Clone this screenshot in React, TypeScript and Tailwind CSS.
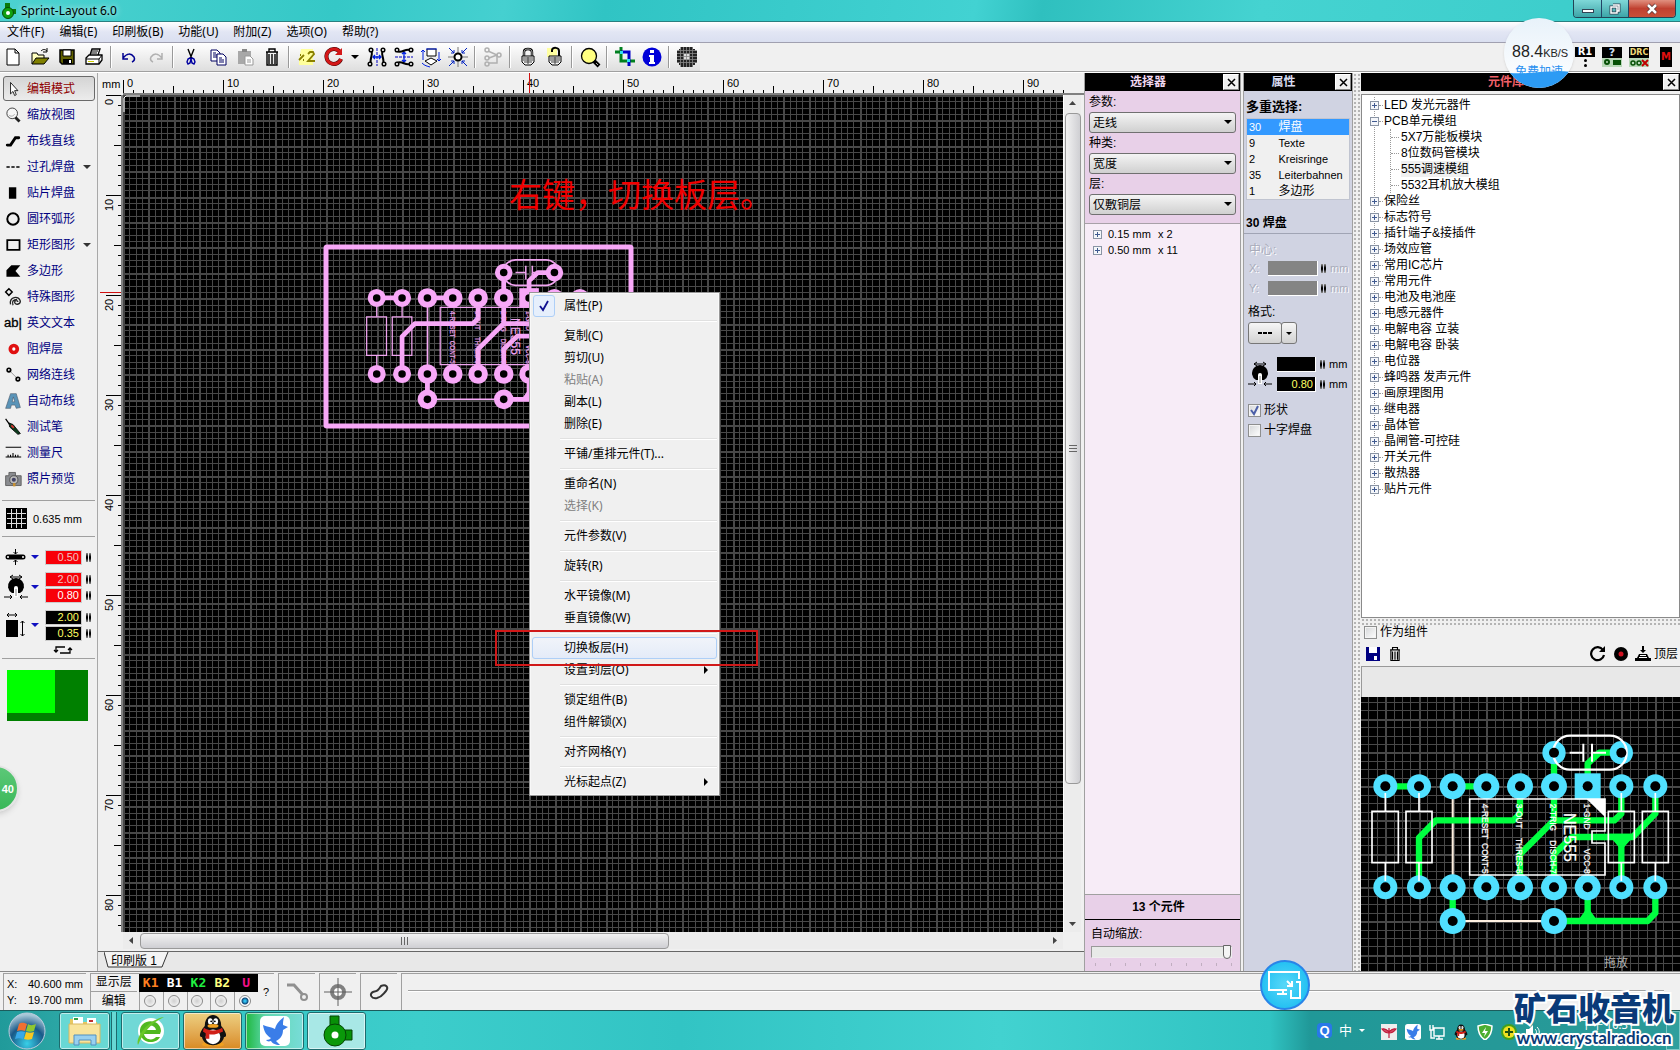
import { ReactNode } from 'react';
import clsx from 'clsx';

const TOOLBAR = [
  'new', 'open', 'save', 'print', '|', 'undo', 'redo', '|', 'cut', 'copy', 'paste', 'trash', '|',
  'double', 'rotate', 'caret', 'mirrorH', 'mirrorV', 'flip', 'center', '|', 'connect', '|',
  'lock', 'unlock', '|', 'zoom', '|', 'crop', 'info', '|', 'mask',
];

const TOOLS: { icon: string; label: string; more?: boolean }[] = [
  { icon: 'pointer', label: '编辑模式' },
  { icon: 'lens', label: '缩放视图' },
  { icon: 'track', label: '布线直线' },
  { icon: 'via', label: '过孔焊盘', more: true },
  { icon: 'smd', label: '贴片焊盘' },
  { icon: 'circle', label: '圆环弧形' },
  { icon: 'rect', label: '矩形图形', more: true },
  { icon: 'polygon', label: '多边形' },
  { icon: 'special', label: '特殊图形' },
  { icon: 'text', label: '英文文本' },
  { icon: 'solder', label: '阻焊层' },
  { icon: 'net', label: '网络连线' },
  { icon: 'auto', label: '自动布线' },
  { icon: 'probe', label: '测试笔' },
  { icon: 'measure', label: '测量尺' },
  { icon: 'camera', label: '照片预览' },
];

const MENU: { label: string; off?: boolean; checked?: boolean; sub?: boolean; hot?: boolean }[][] = [
  [{ label: '属性(P)', checked: true }],
  [{ label: '复制(C)' }, { label: '剪切(U)' }, { label: '粘贴(A)', off: true }, { label: '副本(L)' }, { label: '删除(E)' }],
  [{ label: '平铺/重排元件(T)...' }],
  [{ label: '重命名(N)' }, { label: '选择(K)', off: true }],
  [{ label: '元件参数(V)' }],
  [{ label: '旋转(R)' }],
  [{ label: '水平镜像(M)' }, { label: '垂直镜像(W)' }],
  [{ label: '切换板层(H)', hot: true }, { label: '设置到层(O)', sub: true }],
  [{ label: '锁定组件(B)' }, { label: '组件解锁(X)' }],
  [{ label: '对齐网格(Y)' }],
  [{ label: '光标起点(Z)', sub: true }],
];

const LIBRARY: { label: string; items?: string[] }[] = [
  { label: 'LED 发光元器件' },
  { label: 'PCB单元模组', items: ['5X7万能板模块', '8位数码管模块', '555调速模组', '5532耳机放大模组'] },
  { label: '保险丝' },
  { label: '标志符号' },
  { label: '插针端子&接插件' },
  { label: '场效应管' },
  { label: '常用IC芯片' },
  { label: '常用元件' },
  { label: '电池及电池座' },
  { label: '电感元器件' },
  { label: '电解电容 立装' },
  { label: '电解电容 卧装' },
  { label: '电位器' },
  { label: '蜂鸣器 发声元件' },
  { label: '画原理图用' },
  { label: '继电器' },
  { label: '晶体管' },
  { label: '晶闸管-可控硅' },
  { label: '开关元件' },
  { label: '散热器' },
  { label: '贴片元件' },
];

const LAYERS = [
  { name: 'K1', color: 'text-[#ff8020]' },
  { name: 'B1', color: 'text-white' },
  { name: 'K2', color: 'text-[#20f040]' },
  { name: 'B2', color: 'text-[#ffff80]' },
  { name: 'U', color: 'text-[#f0108a]' },
];

const range = (n: number) => Array.from({ length: n }, (_, i) => i);

/* 22x22 drawings */
const ICONS: Record<string, ReactNode> = {
  new: <path d="M5 3h8l4 4v12H5zM13 3v4h4" fill="#fff" stroke="#000" />,
  open: (
    <>
      <path d="M3 18V7h5l1 2h6v3" fill="#ffffc0" stroke="#000" />
      <path d="M3 18l4-6h13l-5 6z" fill="#808000" stroke="#000" />
      <path d="M12 5c2-2 4-2 6 0M18 2v4h-4" fill="none" stroke="#000" />
    </>
  ),
  save: (
    <>
      <path d="M4 4h14v14H6l-2-2z" fill="#606000" stroke="#000" strokeWidth="1.500" />
      <path d="M7 4h8v6H7z" fill="#fff" stroke="#000" />
      <path d="M7 13h9v5H7z" fill="#000" />
      <path d="M13 14h2v3h-2z" fill="#fff" />
    </>
  ),
  print: (
    <>
      <path d="M7 9l2-6h8l-2 6M3 12l3-3h13v5l-3 4H3z" fill="#fff" stroke="#000" strokeWidth="1.300" />
      <path d="M3 13h13v5M16 13l3-4M9 5h6M8 7h6" fill="none" stroke="#000" />
      <path d="M5 15h6v1H5z" fill="#cc0" />
    </>
  ),
  undo: <path d="M5 7v6h5M5 12c4-5 8-5 11-1 1 2 0 4-2 5" fill="none" stroke="#000090" strokeWidth="1.5" />,
  redo: <path d="M17 7v6h-5M17 12c-4-5-8-5-11-1-1 2 0 4 2 5" fill="none" stroke="#b0b0b0" strokeWidth="1.5" />,
  cut: (
    <>
      <path d="M8 3l4 10M14 3l-4 10" stroke="#000" strokeWidth="1.4" fill="none" />
      <path d="M10 12l-2 1-1 3 1 2 2-1 1-4zM12 12l2 1 1 3-1 2-2-1-1-4z" fill="none" stroke="#0000a0" strokeWidth="1.4" />
    </>
  ),
  copy: (
    <>
      <path d="M4 4h6l3 3v8H4zM6 7h3M6 9h5M6 11h5" fill="#fff" stroke="#000060" />
      <path d="M10 8h6l3 3v8h-9zM12 12h3M12 14h5M12 16h5" fill="#fff" stroke="#000060" />
    </>
  ),
  paste: (
    <>
      <path d="M4 5h13v13H4z" fill="#a8a8a8" />
      <path d="M8 3h5v3H8z" fill="#888" />
      <path d="M11 10h5l3 3v6h-8zM13 14h4M13 16h4" fill="#fff" stroke="#999" />
    </>
  ),
  trash: (
    <path d="M5 6h12M8 6V3h6v3M6 6v13h10V6M8 8v10M11 8v10M14 8v10" fill="none" stroke="#000" strokeWidth="1.400" />
  ),
  double: (
    <>
      <path d="M5 3h12v16H3v-5z" fill="#ffff9c" />
      <path d="M3 14l5-5M4 9h1M7 14h1M12 8l2-2h3l1 2-6 7h7" stroke="#8a8000" strokeWidth="1.800" fill="none" />
    </>
  ),
  rotate: (
    <>
      <path d="M17 6a7.500 7.500 0 1 0 1 7" fill="none" stroke="#400" strokeWidth="4" />
      <path d="M17 6a7.500 7.500 0 1 0 1 7" fill="none" stroke="#d41818" strokeWidth="3" />
      <path d="M19 2v7h-7z" fill="#d41818" />
    </>
  ),
  caret: <path d="M7 9h8l-4 4z" fill="#000" />,
  mirrorH: (
    <>
      <path d="M11 2v18" stroke="#0000c0" strokeDasharray="3 1" />
      <path d="M7 11h8M9 9l-2 2 2 2M13 9l2 2-2 2" fill="none" stroke="#0020e0" strokeWidth="1.300" />
      <path d="M5 5c3 2-2 8 0 13M17 5c-3 2 2 8 0 13" fill="none" stroke="#000" strokeWidth="2" />
      <circle cx="5" cy="4" r="1.800" fill="#fff" stroke="#000" strokeWidth="1.500" />
      <circle cx="4" cy="18" r="1.800" fill="#fff" stroke="#000" strokeWidth="1.500" />
      <circle cx="17" cy="4" r="1.800" fill="#fff" stroke="#000" strokeWidth="1.500" />
      <circle cx="18" cy="18" r="1.800" fill="#fff" stroke="#000" strokeWidth="1.500" />
    </>
  ),
  mirrorV: (
    <>
      <path d="M2 11h18" stroke="#0000c0" strokeDasharray="3 1" />
      <path d="M11 6v10M9 8l2-2 2 2M9 14l2 2 2-2" fill="none" stroke="#0020e0" strokeWidth="1.300" />
      <path d="M4 5c5 3 8-3 13-1M4 17c5-3 8 3 13 1" fill="none" stroke="#000" strokeWidth="2" />
      <circle cx="4" cy="4" r="1.800" fill="#fff" stroke="#000" strokeWidth="1.500" />
      <circle cx="18" cy="4" r="1.800" fill="#fff" stroke="#000" strokeWidth="1.500" />
      <circle cx="4" cy="18" r="1.800" fill="#fff" stroke="#000" strokeWidth="1.500" />
      <circle cx="18" cy="18" r="1.800" fill="#fff" stroke="#000" strokeWidth="1.500" />
    </>
  ),
  flip: (
    <>
      <path d="M7 3h9v7H7zM5 15l6-3 6 3-6 4z" fill="#fff" stroke="#000" />
      <path d="M3 4v10M1 6l2-2 2 2M19 6v9M17 13l2 2 2-2M2 17c3 3 5 3 8 4M6 3h11" fill="none" stroke="#0020e0" />
    </>
  ),
  center: (
    <>
      <path d="M11 1v20M1 11h20" stroke="#777" />
      <path d="M2 2l5 5M7 4v3H4M20 2l-5 5M15 4v3h3M2 20l5-5M7 18v-3H4M20 20l-5-5M15 18v-3h3" fill="none" stroke="#0020c0" />
      <circle cx="11" cy="11" r="3.500" fill="#fff" stroke="#000" strokeWidth="2" />
    </>
  ),
  connect: (
    <g fill="none" stroke="#b0b0b0" strokeWidth="1.500">
      <path d="M6 5l9 4v8H7M7 12l8-3" />
      <circle cx="5" cy="4" r="2" />
      <circle cx="5" cy="12" r="2" />
      <circle cx="5" cy="18" r="2" />
      <circle cx="17" cy="9" r="2" />
    </g>
  ),
  lock: (
    <>
      <path d="M7 10V6c0-4 8-4 8 0v4" fill="none" stroke="#000" strokeWidth="2.400" />
      <path d="M7 10V6c0-4 8-4 8 0v4" fill="none" stroke="#ddd" strokeWidth=".8" />
      <path d="M5 10h12v6l-3 3H8l-3-3z" fill="#f4f4f4" stroke="#000" />
      <path d="M6 12h10M6 14h10M7 16h8M11 11v7" stroke="#444" />
    </>
  ),
  unlock: (
    <>
      <path d="M3 2h10v9H3z" fill="#ffffa0" />
      <path d="M8 6V4c1-3 7-3 7 1v5" fill="none" stroke="#000" strokeWidth="2" />
      <path d="M5 10h12v6l-3 3H8l-3-3z" fill="#f4f4f4" stroke="#000" />
      <path d="M6 12h10M6 14h10M7 16h8M11 11v7" stroke="#444" />
    </>
  ),
  zoom: (
    <>
      <circle cx="10" cy="10" r="7.500" fill="#ffff80" stroke="#000" strokeWidth="1.300" />
      <path d="M15 15l5 5" stroke="#000" strokeWidth="4" />
      <path d="M17 17l2 2" stroke="#aaa" strokeWidth="1" />
    </>
  ),
  crop: (
    <>
      <path d="M1 6h6M7 1v14h8M15 15h6" fill="none" stroke="#008020" strokeWidth="3" />
      <path d="M7 6h8v14" fill="none" stroke="#0000c8" strokeWidth="3" />
      <path d="M6 5h3v3H6zM13 13h3v3h-3z" fill="#30e0f0" />
    </>
  ),
  info: (
    <>
      <circle cx="11" cy="11" r="9.500" fill="#0000d8" />
      <path d="M9 4h4v3H9zM8 9h5v7h1v2H8v-2h1v-5H8z" fill="#fff" />
    </>
  ),
  mask: (
    <>
      <path d="M5 1h12v2h2v2h2v12h-2v2h-2v2H5v-2H3v-2H1V5h2V3h2z" fill="#222" />
      <path d="M8 8h6v6H8z" fill="#ddd" />
      <path d="M4.500 1v20M7.500 1v20M10.500 1v20M13.500 1v20M16.500 1v20M1 4.500h20M1 7.500h20M1 10.500h20M1 13.500h20M1 16.500h20" stroke="#888" strokeWidth=".8" />
    </>
  ),
  pointer: <path d="M8 3v14l3-3 2 5 2-1-2-5h4z" fill="#fff" stroke="#000" />,
  lens: (
    <>
      <circle cx="10" cy="9" r="6.500" fill="#f6f6f6" stroke="#222" />
      <path d="M6 11c2 2 5 2 7-1" stroke="#999" fill="none" />
      <path d="M14 14l5 5" stroke="#222" strokeWidth="3.500" />
    </>
  ),
  track: <path d="M4 16h4l6-9h4" fill="none" stroke="#000" strokeWidth="3.500" strokeLinecap="round" />,
  via: <path d="M3 10h4v2H3zM9 10h4v2H9zM15 10h4v2h-4z" fill="#000" />,
  smd: <path d="M6 4h9v14H6z" fill="#000" />,
  circle: <circle cx="11" cy="11" r="7" fill="none" stroke="#000" strokeWidth="2.400" />,
  rect: <path d="M4 5h15v12H4z" fill="none" stroke="#000" strokeWidth="2.200" />,
  polygon: <path d="M9 4h11l-6 7 6 7H3v-8z" fill="#000" />,
  special: (
    <>
      <path d="M6 1l4 4-4 4-4-4z" fill="none" stroke="#000" strokeWidth="1.800" />
      <path d="M8 20c-2-9 10-12 12-4 0 5-7 5-7 1 0-2 4-2 4 0M11 21c-2-5 1-7 5-7" fill="none" stroke="#222" strokeWidth="1.600" />
    </>
  ),
  text: (
    <text x="0" y="16" fontSize="16" fontFamily="Liberation Sans, sans-serif" stroke="#000" strokeWidth=".4">ab|</text>
  ),
  solder: (
    <>
      <circle cx="12" cy="11" r="6.500" fill="#e01010" />
      <circle cx="12" cy="11" r="2" fill="#fff" />
    </>
  ),
  net: (
    <>
      <path d="M6 5l11 11" stroke="#888" />
      <circle cx="6" cy="5" r="2.200" fill="none" stroke="#000" strokeWidth="2" />
      <circle cx="17" cy="16" r="2.200" fill="none" stroke="#000" strokeWidth="2" />
    </>
  ),
  auto: <path d="M2 20L8 2h7l5 17-5 1-1.500-4H9l-1 4zM10 12h3l-1.500-6z" fill="#5a94b8" stroke="#456" strokeWidth=".7" />,
  probe: (
    <>
      <path d="M2 1l5 7" stroke="#000" strokeWidth="1.500" />
      <path d="M6 6l5 2 9 11-3 1L7 11z" fill="#0b3b1b" stroke="#000" />
      <path d="M9 9l3 3" stroke="#e03030" strokeWidth="2" />
    </>
  ),
  measure: (
    <path d="M2 4h19M2 16h19M5 16v-3M8 16v-3M11 16v-5M14 16v-3M17 16v-3" stroke="#000" strokeWidth="1.300" />
  ),
  camera: (
    <>
      <path d="M2 7h4V3h8v4h7v12H2z" fill="#8a8c90" stroke="#555" />
      <circle cx="12" cy="12" r="5" fill="#bbb" stroke="#444" />
      <circle cx="12" cy="12" r="2.500" fill="#446" />
      <path d="M11 16h3v4h-3z" fill="#c89030" />
    </>
  ),
  padSize: (
    <>
      <path d="M5 1h12M8-1L5 1l3 2M14-1l3 2-3 2" fill="none" stroke="#000" />
      <path d="M7 17a8 8 0 1 1 8 0z" fill="#000" />
      <path d="M9 21v-9a2 2 0 1 1 4 0v9z" fill="#fff" />
      <path d="M10.500 13h1v7h-1z" fill="#888" />
      <path d="M-1 21h8M5 19l2 2-2 2M23 21h-8M17 19l-2 2 2 2" fill="none" stroke="#000" />
    </>
  ),
};

function Icon({ name, small }: { name: string; small?: boolean }) {
  return (
    <svg viewBox="0 0 22 22" className={clsx('block shrink-0 overflow-visible', small ? 'size-[18px]' : 'size-[22px]')} aria-hidden="true">
      {ICONS[name]}
    </svg>
  );
}

/* grid lines, every fourth one is thicker */
function Grid({ cols, rows, step, x = 0, y = 0, scale = 1 }: { cols: number; rows: number; step: number; x?: number; y?: number; scale?: number }) {
  const w = cols * step;
  const h = rows * step;
  return (
    <g fill="#484848" shapeRendering="crispEdges">
      {range(cols).map((i) => (
        <rect key={i} x={Math.round(x + i * step)} y={y} width={(i % 4 ? 1 : 2) * scale} height={h} />
      ))}
      {range(rows).map((i) => (
        <rect key={i} x={x} y={Math.round(y + i * step)} width={w} height={(i % 4 ? 1 : 2) * scale} />
      ))}
    </g>
  );
}

interface BoardProps {
  copper: string;
  pad: string;
  silk: string;
  wire: string;
}

function Board({ copper, pad, silk, wire }: BoardProps) {
  const pads = [
    ...[108, 209, 816, 918].flatMap((x) => [[x, 558, 36], [x, 861, 36]]),
    ...[310, 411, 512, 614].map((x) => [x, 558, 39]),
    ...[310, 411, 512, 614, 715].map((x) => [x, 861, 39]),
    [310, 962, 39], [614, 962, 39], [614, 457, 35], [816, 457, 35],
  ];
  return (
    <g>
      <path d="M310 558V861M310 962H614" stroke={wire} strokeWidth="6" />
      <path
        d="M108 558H209M310 558H411M512 558V640L492 660H260L209 712V861M614 457V660L512 762V861M816 457H750L715 490V558M614 660H795L816 640V558M614 861V762L668 710H850L918 640V558M816 861V710M310 861V962M614 962H895L918 938V861M715 861V962"
        fill="none" stroke={copper} strokeWidth="19" strokeLinejoin="round"
      />
      <path d="M775 700H860L816 750ZM685 962H745L715 920Z" fill={copper} />
      {pads.map(([x, y, r]) => (
        <circle key={`${x}-${y}`} cx={x} cy={y} r={r} fill={pad} />
      ))}
      <rect x="676" y="519" width="78" height="78" fill={pad} />
      <g fill="none" stroke={silk} strokeWidth="5">
        <path d="M108 578V633M108 787V842M209 578V633M209 787V842M816 578V633M816 787V842M918 578V633M918 787V842" />
        <path d="M68 633H147V787H68ZM170 633H248V787H170ZM777 633H855V787H777ZM879 633H957V787H879Z" />
        <path d="M767 596H361V824H767V728H728V692H767Z" />
        <rect x="612" y="406" width="220" height="102" rx="50" strokeWidth="7" />
        <path d="M661 457H702M702 430V484M728 430V484M728 457H770" strokeWidth="6" />
      </g>
      <path d="M712 596H767V650Z" fill={silk} />
      {pads.concat([[715, 558, 0]]).map(([x, y]) => (
        <circle key={`h${x}-${y}`} cx={x} cy={y} r="15" fill="#000" />
      ))}
      <g fill={silk} stroke={silk} strokeWidth=".8" fontSize="25" fontFamily="Liberation Sans, sans-serif">
        <text transform="translate(399 610) rotate(90)">4-RESET</text>
        <text transform="translate(399 820) rotate(90)" textAnchor="end">CONT-5</text>
        <text transform="translate(501 610) rotate(90)">3-OUT</text>
        <text transform="translate(501 820) rotate(90)" textAnchor="end">THRES-6</text>
        <text transform="translate(603 610) rotate(90)">2-TRIG</text>
        <text transform="translate(603 820) rotate(90)" textAnchor="end">DISCH-7</text>
        <text transform="translate(703 610) rotate(90)">1-GND</text>
        <text transform="translate(703 820) rotate(90)" textAnchor="end">VCC-8</text>
        <text transform="translate(643 638) rotate(90)" fontSize="48">NE555</text>
      </g>
    </g>
  );
}

function TitleBar() {
  return (
    <header className="flex h-[22px] shrink-0 items-center border-b border-[#2a7f80] bg-[linear-gradient(100deg,#4cd2d0_0%,#35c8c7_20%,#45d0d0_30%,#30c4c4_36%,#42d2d2_58%,#2fc0bf_62%,#45d3d1_75%,#3accca_100%)] pl-px">
      <svg viewBox="0 0 16 16" className="size-4" aria-hidden="true">
        <path d="M4 0h5v6H4zM9 6h6v5H9z" fill="#0a7a0a" />
        <circle cx="7" cy="10" r="5.500" fill="#10a010" stroke="#054d05" />
        <circle cx="7" cy="10" r="2" fill="#fff" />
      </svg>
      <h1 className="ml-1 font-['Noto_Sans'] text-[12px] text-black [text-shadow:0_0_6px_white]">Sprint-Layout 6.0</h1>
      <div className="mr-1 ml-auto flex h-[18px] self-start overflow-hidden rounded-b border border-t-0 border-[#245]">
        <button aria-label="最小化" className="flex w-7 items-center justify-center border-r border-[#246] bg-gradient-to-b from-[#7fd8d8] to-[#3ba5a8]">
          <span className="mt-1 h-1 w-3 border border-[#345] bg-white" />
        </button>
        <button aria-label="还原" className="flex w-[27px] items-center justify-center border-r border-[#246] bg-gradient-to-b from-[#7fd8d8] to-[#3ba5a8]">
          <svg viewBox="0 0 12 12" className="size-3" aria-hidden="true">
            <path d="M4 2h6v6H8M2 4h6v6H2z" fill="none" stroke="#345" strokeWidth="3" />
            <path d="M4 2h6v6H8M2 4h6v6H2z" fill="none" stroke="#fff" strokeWidth="1.500" />
          </svg>
        </button>
        <button aria-label="关闭" className="flex w-[46px] items-center justify-center bg-gradient-to-b from-[#e09080] via-[#c04030] to-[#c85038]">
          <svg viewBox="0 0 12 12" className="size-3" aria-hidden="true">
            <path d="M2 2l8 8M10 2l-8 8" stroke="#533" strokeWidth="4" />
            <path d="M2 2l8 8M10 2l-8 8" stroke="#fff" strokeWidth="2.500" />
          </svg>
        </button>
      </div>
    </header>
  );
}

function MenuBar() {
  const entries = ['文件(F)', '编辑(E)', '印刷板(B)', '功能(U)', '附加(Z)', '选项(O)', '帮助(?)'];
  return (
    <nav className="flex h-[21px] shrink-0 items-center gap-[15px] border-b border-[#a0a0b0] bg-gradient-to-b from-white via-[#e2e6f4] to-[#dadff0] pl-[7px] font-['Noto_Sans','Noto_Sans_CJK_SC',sans-serif]">
      {entries.map((e) => (
        <button key={e}>{e}</button>
      ))}
    </nav>
  );
}

function Toolbar() {
  return (
    <div className="flex h-[29px] shrink-0 justify-between border-b border-[#a0a0a0] bg-[#f0f0f0]">
      <div className="-ml-px flex items-center bg-gradient-to-b from-white to-[#dedede]">
        {TOOLBAR.map((name, i) =>
          name === '|' ? (
            <span key={i} className="mx-[3px] h-[22px] w-[2px] border-l border-[#999] bg-white" />
          ) : (
            <button key={i} aria-label={name} className={clsx('flex items-center justify-center', name === 'caret' ? 'w-4' : 'w-[27px]')}>
              <Icon name={name} />
            </button>
          )
        )}
      </div>
      <div className="mr-1 flex items-center gap-[7px] font-['DejaVu_Sans'] leading-none font-bold">
        <button className="flex h-5 w-5 flex-col items-center">
          <span className="w-full bg-black text-center text-[10px] text-white">R1</span>
          <i className="mt-[2px] size-[3px] rounded-full bg-black" />
          <i className="mt-[2px] size-[3px] rounded-full bg-black" />
        </button>
        <button className="flex h-5 w-5 flex-col items-center bg-[#b8d8b8]">
          <span className="w-full bg-black text-center text-[11px] text-[#d0e0f0]">?</span>
          <span className="flex w-full items-center justify-around pt-px">
            <i className="size-[6px] rounded-full border-2 border-[#075007]" />
            <i className="h-[5px] w-2 bg-[#075007]" />
          </span>
        </button>
        <button className="flex h-5 w-5 flex-col items-center bg-[#b8d8b8]">
          <span className="w-full overflow-hidden bg-black text-center text-[8px] leading-[11px] text-[#f0d878]">DRC</span>
          <svg viewBox="0 0 20 9" className="h-[9px] w-5" aria-hidden="true">
            <circle cx="4" cy="5" r="2" fill="none" stroke="#075007" strokeWidth="1.500" />
            <circle cx="10" cy="5" r="2" fill="none" stroke="#075007" strokeWidth="1.500" />
            <path d="M13 2l6 6M19 2l-6 6" stroke="#c00000" strokeWidth="2" />
          </svg>
        </button>
        <button className="flex h-5 w-5 items-center justify-center">
          <span className="flex h-5 w-3 items-center justify-center bg-black text-[10px] text-[#e01010]">M</span>
        </button>
      </div>
    </div>
  );
}

function Spin() {
  return (
    <span className="flex h-[9px] w-[5px] shrink-0 justify-between" aria-hidden="true">
      <i className="w-[2px] bg-gradient-to-b from-[#999] via-black to-[#999]" />
      <i className="w-[2px] bg-gradient-to-b from-[#999] via-black to-[#999]" />
    </span>
  );
}

function SideField({ label, value, tone }: { label: string; value: string; tone: string }) {
  return (
    <div className="flex h-4 items-center gap-1">
      <input aria-label={label} defaultValue={value} className={clsx('h-[15px] w-[37px] border border-[#ccc] pr-[2px] text-right text-[11px] leading-none', tone)} />
      <Spin />
    </div>
  );
}

function BlueCaret() {
  return <span className="mr-[6px] ml-1 block size-0 border-x-4 border-t-4 border-x-transparent border-t-[#1010c0]" />;
}

function Sidebar() {
  return (
    <aside className="relative w-[98px] shrink-0 border-r border-[#a8a8a8] bg-[#f0f0f0] pt-[3px]">
      {TOOLS.map((t, i) => (
        <button
          key={t.label}
          className={clsx(
            'mx-[3px] mb-px flex h-[25px] w-[92px] items-center rounded-[3px] border',
            i === 0 ? 'border-[#6a6a6a] bg-gradient-to-b from-[#d4d4d4] to-[#ececec] text-[#900000]' : 'border-transparent text-[#000080]'
          )}
        >
          <Icon name={t.icon} small />
          <span className="ml-[5px] text-[12px]">{t.label}</span>
          {t.more && <span className="ml-2 size-0 border-x-4 border-t-4 border-x-transparent border-t-[#333]" />}
        </button>
      ))}
      <div className="mx-[2px] mt-[9px] flex h-[37px] items-center border-y border-[#a0a0a0] pl-1">
        <svg viewBox="0 0 21 21" className="size-[21px]" aria-hidden="true">
          <path d="M0 0h21v21H0z" />
          <path d="M5.500 1v19M10.500 1v19M15.500 1v19M1 5.500h19M1 10.500h19M1 15.500h19" stroke="#ddd" />
        </svg>
        <span className="ml-[6px] text-[11px]">0.635 mm</span>
      </div>
      <div className="mx-[2px] border-b border-[#a0a0a0] pt-3 pb-[3px]">
        <div className="flex items-center">
          <svg viewBox="0 0 22 16" className="ml-[3px] h-4 w-[22px]" aria-hidden="true">
            <path d="M3 8h15" stroke="#000" strokeWidth="5" strokeLinecap="round" />
            <path d="M10.500 0v5M8.500 3l2 2 2-2M10.500 16v-5M8.500 13l2-2 2 2" fill="none" stroke="#000" />
            <circle cx="3" cy="8" r="1" fill="#fff" />
            <circle cx="18" cy="8" r="1" fill="#fff" />
          </svg>
          <BlueCaret />
          <SideField label="线宽" value="0.50" tone="bg-[#f80008] text-[#f0c0c0]" />
        </div>
        <div className="mt-[6px] flex items-center">
          <span className="ml-[3px]"><Icon name="padSize" /></span>
          <BlueCaret />
          <div>
            <SideField label="焊盘外径" value="2.00" tone="bg-[#f80008] text-[#f0c0c0]" />
            <SideField label="焊盘内径" value="0.80" tone="bg-[#f80008] text-white" />
          </div>
        </div>
        <div className="mt-[6px] flex items-center">
          <svg viewBox="0 0 22 26" className="ml-[3px] h-[26px] w-[22px]" aria-hidden="true">
            <path d="M1 8h12v17H1z" />
            <path d="M2 3h10M4 1L2 3l2 2M10 1l2 2-2 2M17.500 9v15M15.500 11l2-2 2 2M15.500 22l2 2 2-2" fill="none" stroke="#000" />
          </svg>
          <BlueCaret />
          <div>
            <SideField label="贴片宽" value="2.00" tone="bg-black text-[#ffff60]" />
            <SideField label="贴片高" value="0.35" tone="bg-black text-[#ffff60]" />
          </div>
        </div>
        <button aria-label="交换" className="mt-1 ml-[50px] block">
          <svg viewBox="0 0 22 10" className="h-[10px] w-[22px]" aria-hidden="true">
            <path d="M13 2H4v5M2 5l2 2 2-2M8 8h10V3M16 5l2-2 2 2" fill="none" stroke="#000" strokeWidth="1.300" />
          </svg>
        </button>
      </div>
      <div className="mx-[7px] mt-[11px] h-[51px] w-[81px] bg-[#008000]">
        <div className="h-[43px] w-12 bg-[#00ff00]" />
      </div>
      <div className="absolute top-[692px] -left-[28px] flex size-[47px] items-center justify-end rounded-full border-2 border-[#e4e4e4] bg-gradient-to-b from-[#5cc878] to-[#38b858] pr-[3px] text-[11px] font-bold text-white shadow-md">40</div>
    </aside>
  );
}

function ContextMenu() {
  return (
    <ul role="menu" className="absolute top-[197px] left-[406px] w-[191px] border border-[#979797] bg-[#f0f0f0] p-[2px] font-['Noto_Sans','Noto_Sans_CJK_SC',sans-serif] shadow-[inset_0_0_0_1px_#f8f8f8]">
      {MENU.map((group, g) => (
        <li key={g} role="none">
          {g > 0 && <div className="flex h-2 items-center pl-7"><div className="h-[2px] w-full border-t border-[#e0e0e0] bg-white" /></div>}
          {group.map((m) => (
            <button
              key={m.label}
              role="menuitem"
              className={clsx(
                'flex h-[22px] w-full items-center rounded-[3px] border text-left',
                m.hot ? 'border-[#aecff7] bg-gradient-to-b from-[#f1f4fa] to-[#e4ebf8]' : 'border-transparent',
                m.off ? 'text-[#808080]' : 'text-black'
              )}
            >
              <span className={clsx('flex size-[22px] shrink-0 items-center justify-center rounded-[3px]', m.checked && 'border border-[#aecff7] bg-[#e6effc]')}>
                {m.checked && (
                  <svg viewBox="0 0 12 12" className="size-3" aria-hidden="true">
                    <path d="M2 6l3 4 5-9" fill="none" stroke="#101090" strokeWidth="1.800" />
                  </svg>
                )}
              </span>
              <span className="ml-2 grow pl-px">{m.label}</span>
              {m.sub && <span className="mr-2 size-0 border-y-4 border-l-4 border-y-transparent border-l-black" />}
            </button>
          ))}
        </li>
      ))}
    </ul>
  );
}

function ScrollArrow({ d }: { d: string }) {
  return (
    <svg viewBox="0 0 17 17" className="size-[17px] shrink-0" aria-hidden="true">
      <path d={d} fill="#444" />
    </svg>
  );
}

function Workspace() {
  return (
    <main className="flex min-w-0 flex-1 flex-col bg-[#f0f0f0]">
      <div className="flex h-[22px] shrink-0">
        <span className="flex w-[25px] shrink-0 items-center pl-1 text-[11px]">mm</span>
        <svg className="h-[22px] min-w-0 flex-1" shapeRendering="crispEdges" aria-hidden="true">
          {range(95).map((i) => (
            <rect key={i} x={i * 10} y={i % 10 === 0 ? 7 : i % 5 === 0 ? 13 : 17} width="1" height="15" fill="#000" />
          ))}
          <rect x="0" y="20" width="100%" height="2" fill="#808080" />
          {range(10).map((i) => (
            <text key={i} x={i * 100 + 4} y="14" fontSize="11" fontFamily="Liberation Sans, sans-serif">{i * 10}</text>
          ))}
          <rect x="406" y="0" width="1" height="20" fill="#d01010" />
        </svg>
      </div>
      <div className="flex min-h-0 flex-1">
        <svg className="h-full w-[25px] shrink-0" shapeRendering="crispEdges" aria-hidden="true">
          {range(85).map((i) => (
            <rect key={i} x={i % 10 === 0 ? 8 : i % 5 === 0 ? 16 : 20} y={i * 10} width={i % 10 === 0 ? 15 : i % 5 === 0 ? 7 : 3} height="1" fill="#000" />
          ))}
          <rect x="2" y="197" width="21" height="1" fill="#d01010" />
          <rect x="23" y="0" width="2" height="100%" fill="#808080" />
          {range(9).map((i) => (
            <text key={i} transform={`translate(15 ${i * 100 + (i ? 16 : 10)}) rotate(-90)`} fontSize="11" fontFamily="Liberation Sans, sans-serif">{i * 10}</text>
          ))}
        </svg>
        <div className="relative min-w-0 flex-1 overflow-hidden bg-black">
          <svg className="block h-full w-full" role="img" aria-label="PCB">
            <Grid cols={400} rows={260} step={6.35} />
            <path d="M1 17V3L3 1H17" fill="none" stroke="#fff" />
            <rect x="203" y="152" width="305" height="179" rx="1" fill="none" stroke="#f8a8f8" strokeWidth="5" />
            <g transform="translate(226.600 62.900) scale(.251)">
              <Board copper="#f8a8f8" pad="#f8a8f8" silk="#f0a4f0" wire="#f8a8f8" />
            </g>
          </svg>
          <p className="absolute top-[80px] left-[386px] text-[33px] leading-[42px] whitespace-nowrap text-[#f00000]">右键，切换板层。</p>
          <ContextMenu />
          <div className="pointer-events-none absolute top-[535px] left-[372px] h-[36px] w-[263px] border-2 border-[#d01818]" />
        </div>
        <div className="mr-[3px] flex w-[18px] shrink-0 flex-col items-center border-l border-white bg-[#ececec]">
          <ScrollArrow d="M5 10h7l-3.500-4z" />
          <div className="my-px flex min-h-0 w-4 grow-[66] items-center justify-center rounded-sm border border-[#999] bg-gradient-to-r from-[#f2f2f2] to-[#cfcfd3]">
            <span className="h-[7px] w-2 border-y border-[#666] bg-[linear-gradient(transparent_2px,#666_2px,#666_3px,transparent_3px)]" />
          </div>
          <div className="grow-[13]" />
          <ScrollArrow d="M5 7h7l-3.500 4z" />
        </div>
      </div>
      <div className="mr-[21px] ml-[25px] flex h-[17px] shrink-0 items-center bg-[#ececec]">
        <ScrollArrow d="M10 5v7l-4-3.500z" />
        <div className="flex h-4 grow-[58] items-center justify-center rounded-sm border border-[#999] bg-gradient-to-b from-[#f2f2f2] to-[#cfcfd3]">
          <span className="h-2 w-[7px] border-x border-[#666] bg-[linear-gradient(90deg,transparent_2px,#666_2px,#666_3px,transparent_3px)]" />
        </div>
        <div className="grow-[42]" />
        <ScrollArrow d="M7 5v7l4-3.500z" />
      </div>
      <div className="mt-[2px] flex h-5 shrink-0 border-t border-[#666] bg-[#f8f8f8] bg-[radial-gradient(#e8e8e8_1px,transparent_1px)] bg-[size:2px_2px] pl-[6px]">
        <button className="relative h-[17px] w-[68px] text-[12px] leading-[16px]">
          <svg viewBox="0 0 68 17" className="absolute inset-0 h-[17px] w-[68px]" aria-hidden="true">
            <path d="M0 0l4 15h54l6-15" fill="#f4f4f4" stroke="#333" />
          </svg>
          <span className="relative pr-2">印刷版 1</span>
        </button>
      </div>
    </main>
  );
}

function PanelHeader({ title, tone }: { title: string; tone: string }) {
  return (
    <div className="flex h-[18px] shrink-0 items-center bg-black">
      <h2 className={clsx('flex-1 pr-3 text-center text-[12px] leading-none font-bold', tone)}>{title}</h2>
      <button aria-label="关闭" className="mr-px flex size-4 items-center justify-center border border-white border-r-[#888] border-b-[#888] bg-[#f0f0f0]">
        <svg viewBox="0 0 9 9" className="size-[9px]" aria-hidden="true">
          <path d="M1 1l7 7M8 1l-7 7" stroke="#000" strokeWidth="1.500" />
        </svg>
      </button>
    </div>
  );
}

function SelectField({ id, label, value }: { id: string; label: string; value: string }) {
  return (
    <div>
      <label htmlFor={id} className="block h-5 leading-5">{label}</label>
      <div className="relative">
        <select id={id} className="block h-[21px] w-full appearance-none rounded-[3px] border border-[#707070] bg-gradient-to-b from-[#f4f4f4] to-[#d0d0d0] pl-[3px] leading-none">
          <option>{value}</option>
        </select>
        <span className="pointer-events-none absolute top-2 right-1 size-0 border-x-4 border-t-4 border-x-transparent border-t-black" />
      </div>
    </div>
  );
}

function ExpandBox({ open }: { open?: boolean }) {
  return (
    <svg viewBox="0 0 9 9" className="size-[9px] shrink-0" shapeRendering="crispEdges" aria-hidden="true">
      <rect x=".5" y=".5" width="8" height="8" fill="#f4f6fa" stroke="#8a94a4" />
      <path d={open ? 'M2 4.500h5' : 'M2 4.500h5M4.500 2v5'} stroke="#405a90" />
    </svg>
  );
}

function SelectorPanel() {
  return (
    <section className="flex w-[157px] shrink-0 flex-col border-x border-[#a0a0a0] bg-[#e8d0e8]">
      <PanelHeader title="选择器" tone="text-[#f0d8f0]" />
      <div className="px-1 pt-px pb-2">
        <SelectField id="param" label="参数:" value="走线" />
        <SelectField id="kind" label="种类:" value="宽度" />
        <SelectField id="layer" label="层:" value="仅敷铜层" />
      </div>
      <ul className="flex-1 border-t border-[#a8a0a8] bg-[#f7ecf7] pt-[2px] pl-2 text-[11px]">
        {[['0.15 mm', 'x 2'], ['0.50 mm', 'x 11']].map(([w, n]) => (
          <li key={w} className="flex h-4 items-center">
            <ExpandBox />
            <span className="ml-[6px] w-[50px]">{w}</span>
            <span>{n}</span>
          </li>
        ))}
      </ul>
      <p className="flex h-[26px] items-center justify-center border-t border-b border-t-[#a0a0a0] border-b-black pr-2 text-[12px] font-bold">13 个元件</p>
      <div className="h-[51px] px-[6px] pt-1">
        <label htmlFor="autozoom" className="block leading-5">自动缩放:</label>
        <input
          id="autozoom" type="range" defaultValue={100}
          className="mt-[2px] block h-3 w-[141px] appearance-none border border-t-[#999] border-r-[#eee] border-b-[#eee] border-l-[#999] bg-[#e8eae8] [&::-webkit-slider-thumb]:h-[14px] [&::-webkit-slider-thumb]:w-2 [&::-webkit-slider-thumb]:appearance-none [&::-webkit-slider-thumb]:rounded-b-md [&::-webkit-slider-thumb]:border [&::-webkit-slider-thumb]:border-[#666] [&::-webkit-slider-thumb]:bg-[#f4f4f4]"
        />
        <div className="mt-[5px] mr-[2px] ml-1 flex h-[3px] justify-between">
          {range(10).map((i) => (
            <i key={i} className="w-px bg-[#c0aec0]" />
          ))}
        </div>
      </div>
    </section>
  );
}

function PropertiesPanel() {
  const rows = [['30', '焊盘'], ['9', 'Texte'], ['2', 'Kreisringe'], ['35', 'Leiterbahnen'], ['1', '多边形']];
  return (
    <section className="ml-[2px] flex w-[110px] shrink-0 flex-col border-x border-[#a0a0a0] bg-[#d0d3e2]">
      <PanelHeader title="属性" tone="text-[#d8dcf0]" />
      <h3 className="px-[2px] pt-[5px] text-[13px] leading-[22px] font-bold">多重选择:</h3>
      <table className="mx-[2px] border border-[#c0c4d0] bg-[#f0f0f0] text-[11px] leading-4">
        <tbody>
          {rows.map(([n, name], i) => (
            <tr key={n} className={i === 0 ? 'bg-[#3399ff] text-white' : ''}>
              <td className="h-4 w-8 pl-[2px]">{n}</td>
              <td className={clsx('whitespace-nowrap', (i === 0 || i === 4) && 'text-[12px]')}>{name}</td>
            </tr>
          ))}
        </tbody>
      </table>
      <h3 className="mt-[13px] border-b border-[#a0a4b4] px-[2px] text-[12px] leading-5 font-bold">30 焊盘</h3>
      <div className="pt-2 pl-[5px] text-[#a8abba] [text-shadow:1px_1px_0_white]">
        <p className="leading-4">中心:</p>
        {['X', 'Y'].map((axis) => (
          <label key={axis} className="flex h-5 items-center text-[11px]">
            <span className="w-[19px]">{axis}:</span>
            <input disabled className="mr-[3px] h-[15px] w-[50px] border-r border-b border-white bg-[#848484]" />
            <Spin />
            <span className="ml-1">mm</span>
          </label>
        ))}
      </div>
      <div className="pt-1 pl-1">
        <p className="leading-5">格式:</p>
        <div className="flex h-[22px]">
          <button aria-label="圆形焊盘" className="flex w-[34px] items-center justify-center gap-px rounded-[3px] border border-[#777] bg-gradient-to-b from-[#f6f6f6] to-[#d2d2d2]">
            <i className="h-[2px] w-1 bg-black" />
            <i className="h-[2px] w-1 bg-black" />
            <i className="h-[2px] w-1 bg-black" />
          </button>
          <button aria-label="更多格式" className="-ml-px flex w-4 items-center justify-center rounded-[3px] border border-[#777] bg-gradient-to-b from-[#f6f6f6] to-[#d2d2d2]">
            <span className="size-0 border-x-[3px] border-t-[3px] border-x-transparent border-t-black" />
          </button>
        </div>
        <div className="mt-[10px] mb-[9px] flex items-center text-[11px]">
          <span className="mr-[6px] ml-px"><Icon name="padSize" /></span>
          <div>
            {[['外径', ''], ['内径', '0.80']].map(([name, value]) => (
              <div key={name} className="flex h-5 items-center">
                <input aria-label={name} defaultValue={value} className="mr-1 h-[15px] w-[39px] border-r border-b border-white bg-black pr-[2px] text-right leading-none text-[#ffff60]" />
                <Spin />
                <span className="ml-1">mm</span>
              </div>
            ))}
          </div>
        </div>
        <CheckField label="形状" checked />
        <CheckField label="十字焊盘" />
      </div>
    </section>
  );
}

function CheckField({ label, checked }: { label: string; checked?: boolean }) {
  return (
    <label className="mb-[6px] flex h-[14px] items-center gap-[3px] whitespace-nowrap">
      <span className="relative size-[13px]">
        <input type="checkbox" defaultChecked={checked} className="block size-[13px] appearance-none border border-[#8e8f8f] bg-gradient-to-br from-[#d4d6d8] to-white shadow-[inset_0_0_0_1px_#f4f4f4]" />
        {checked && (
          <svg viewBox="0 0 13 13" className="pointer-events-none absolute inset-0 size-[13px]" aria-hidden="true">
            <path d="M3 6l3 4 4-8" fill="none" stroke="#4b5fa8" strokeWidth="2" />
          </svg>
        )}
      </span>
      {label}
    </label>
  );
}

const DOTS = 'bg-[#f0f0f0] bg-[radial-gradient(#b4b4b4_1px,transparent_1px)] bg-[size:4px_4px]';

function LibraryPanel() {
  return (
    <section className="flex w-[319px] shrink-0 flex-col bg-[#f0f0f0]">
      <PanelHeader title="元件库" tone="text-[#f06068]" />
      <ul className="mt-[3px] min-h-0 flex-1 overflow-hidden border border-[#8a8a8a] bg-white pt-[2px] pl-2">
        {LIBRARY.map((n) => (
          <li key={n.label} className="bg-[linear-gradient(#999_50%,transparent_50%)] bg-[size:1px_2px] bg-[position:4px_0] bg-repeat-y">
            <button className="flex h-4 items-center leading-4">
              <ExpandBox open={!!n.items} />
              <span className="mr-px w-1 border-t border-dotted border-[#999]" />
              {n.label}
            </button>
            {n.items && (
              <ul className="ml-5 border-l border-dotted border-[#999]">
                {n.items.map((c, i) => (
                  <li key={c} className="flex h-4 items-center leading-4">
                    <span className="mr-[2px] w-2 border-t border-dotted border-[#999]" />
                    <button className={i === 2 ? 'bg-[#f0f0f0]' : ''}>{c}</button>
                  </li>
                ))}
              </ul>
            )}
          </li>
        ))}
      </ul>
      <div className={clsx('h-[7px] shrink-0', DOTS)} />
      <div className="h-[41px] shrink-0 pr-[2px] pl-[3px]">
        <CheckField label="作为组件" />
        <div className="flex items-center">
          <button aria-label="保存" className="ml-[2px]">
            <svg viewBox="0 0 14 14" className="size-[14px]" aria-hidden="true">
              <path d="M0 0h14v14H0z" fill="#000080" />
              <path d="M3 0h8v6H3zM8 9h3v4H8z" fill="#fff" />
            </svg>
          </button>
          <button aria-label="删除" className="ml-[6px]"><Icon name="trash" small /></button>
          <button aria-label="旋转" className="ml-auto">
            <svg viewBox="0 0 16 16" className="size-4" aria-hidden="true">
              <path d="M13 4a6.500 6.500 0 1 0 1 5" fill="none" stroke="#000" strokeWidth="2.200" />
              <path d="M15 0v6H9z" />
            </svg>
          </button>
          <button aria-label="焊盘" className="ml-2">
            <svg viewBox="0 0 14 14" className="size-[14px]" aria-hidden="true">
              <circle cx="7" cy="7" r="7" />
              <circle cx="7" cy="7" r="2.500" fill="#d01020" />
            </svg>
          </button>
          <button className="ml-[7px] flex items-center gap-[3px]">
            <svg viewBox="0 0 16 16" className="size-4" aria-hidden="true">
              <path d="M7 0h2v4h2L8 7 5 4h2zM4 8h8l2 4h2v3H0v-3h2z" />
              <path d="M5 9.500h6M4 11.500h8" stroke="#fff" />
            </svg>
            顶层
          </button>
        </div>
      </div>
      <div className="h-[31px] shrink-0 border-t border-l border-[#999] bg-[#e8e8e8]" />
      <div className="relative h-[274px] shrink-0 overflow-hidden bg-black">
        <svg viewBox="35 290 957 822" className="block h-full w-full" role="img" aria-label="预览">
          <Grid cols={50} rows={50} step={25.3} x={6} y={254} scale={3} />
          <Board copper="#00ff40" pad="#50e0ff" silk="#ffffff" wire="#fff0e0" />
        </svg>
        <span className="absolute right-[52px] bottom-0 leading-4 text-[#b0b0b0]">拖放</span>
      </div>
    </section>
  );
}

function StatusBar() {
  const cell = 'border-t border-l border-[#a0a0a0]';
  return (
    <footer className="flex h-[39px] shrink-0 gap-1 border-t border-[#888] bg-[#f0f0f0] pt-px pl-[3px]">
      <dl className={clsx('grid w-[83px] grid-cols-[16px_1fr] content-center pr-[3px] pl-[3px] text-[11px] leading-4', cell)}>
        <dt>X:</dt><dd className="text-right whitespace-nowrap">40.600 mm</dd>
        <dt>Y:</dt><dd className="text-right whitespace-nowrap">19.700 mm</dd>
      </dl>
      <div className={clsx('flex w-[184px]', cell)}>
        <div className="w-12 pr-[2px] text-center">
          <p className="h-[18px] border-b border-[#a0a0a0] leading-[17px]">显示层</p>
          <p className="leading-[19px]">编辑</p>
        </div>
        {LAYERS.map((l) => (
          <label key={l.name} className="flex w-6 flex-col">
            <span className={clsx('h-[18px] bg-black text-center font-["DejaVu_Sans_Mono"] text-[13px] leading-[17px] font-bold', l.color)}>{l.name}</span>
            <span className="flex flex-1 items-center justify-center border-l border-[#a0a0a0] pr-[3px]">
              <input
                type="radio" name="layer" defaultChecked={l.name === 'U'}
                className="size-3 appearance-none rounded-full border border-[#8a8a8a] bg-[radial-gradient(#d0d0d0,#fff)] checked:bg-[radial-gradient(#30c0f0_1px,#104878_3px,#fff_4px)]"
              />
            </span>
          </label>
        ))}
        <button className="w-4 text-[11px]">?</button>
      </div>
      <button aria-label="线路" className={clsx('flex w-[37px] items-center justify-center', cell)}>
        <svg viewBox="0 0 24 20" className="h-5 w-6" aria-hidden="true">
          <path d="M2 3h7l9 10" fill="none" stroke="#909090" strokeWidth="3" />
          <circle cx="19" cy="15" r="3" fill="#f0f0f0" stroke="#909090" strokeWidth="2" />
        </svg>
      </button>
      <button aria-label="中心焊盘" className={clsx('flex w-[37px] items-center justify-center', cell)}>
        <svg viewBox="0 0 28 28" className="size-7" aria-hidden="true">
          <circle cx="14" cy="14" r="6" fill="#fff" stroke="#808080" strokeWidth="4" />
          <path d="M14 0v28M0 14h28" stroke="#606060" />
        </svg>
      </button>
      <button aria-label="形状" className={clsx('flex w-[37px] items-center justify-center', cell)}>
        <svg viewBox="0 0 20 16" className="h-4 w-5" aria-hidden="true">
          <path d="M12 2c5-2 8 1 5 5-3 3-4 6-9 7-6 1-8-4-4-6 4-1 5-1 8-6z" fill="none" stroke="#333" strokeWidth="2" />
        </svg>
      </button>
      <div className={clsx('flex flex-1 items-center px-4 pl-[6px]', cell)}>
        <span className="mb-[2px] h-[2px] w-full border-t border-[#a0a0a0] bg-white" />
      </div>
    </footer>
  );
}

function Penguin() {
  return (
    <svg viewBox="0 0 32 36" className="h-full w-full" aria-hidden="true">
      <ellipse cx="10" cy="33" rx="6" ry="2.500" fill="#f0a020" />
      <ellipse cx="22" cy="33" rx="6" ry="2.500" fill="#f0a020" />
      <path d="M7 13C7-3 25-3 25 13c7 8 6 13 3 12-2 12-22 12-24 0-3 1-4-4 3-12z" fill="#111" />
      <ellipse cx="16" cy="25" rx="8" ry="8" fill="#fff" />
      <ellipse cx="13" cy="8" rx="2.500" ry="3.500" fill="#fff" />
      <ellipse cx="19" cy="8" rx="2.500" ry="3.500" fill="#fff" />
      <circle cx="14" cy="8" r="1" />
      <circle cx="18" cy="8" r="1" />
      <ellipse cx="16" cy="13" rx="6" ry="2" fill="#f0a020" />
      <path d="M6 15c6 4 14 4 20 0l1 4c-6 3-12 4-15 3v5H8v-6l-3-2z" fill="#d02018" />
    </svg>
  );
}

function Bird() {
  return (
    <svg viewBox="0 0 30 30" className="h-full w-full" aria-hidden="true">
      <rect width="30" height="30" rx="5" fill="#fff" />
      <path d="M3 9c5 2 8 2 12 4 1-5 5-9 9-12-1 4-1 6-1 8l5 2-5 3c0 6-3 9-7 11l4 4c-5 0-8-2-9-4-3 1-4 0-5-1 3 0 4-1 5-2-4-2-7-6-8-13z" fill="#3a7de8" />
    </svg>
  );
}

function TaskBar() {
  const task = 'flex h-[38px] items-center justify-center rounded-[3px] border border-[#1d6b6d] shadow-[inset_0_0_0_1px_#ffffff90]';
  return (
    <footer className="flex h-10 shrink-0 items-center border-t border-[#1c5c5c] bg-[linear-gradient(90deg,#209a9a_0,#2ba6a5_60px,#36c4c2_110px,#3ccdcb_420px,#32c4c4_680px,#42d2d0_1000px,#30c3c2_1270px,#209898_1310px,#2a9a98_100%)]">
      <button aria-label="开始" className="ml-[8px]">
        <svg viewBox="0 0 38 38" className="size-[38px]" aria-hidden="true">
          <defs>
            <radialGradient id="orb" cx=".5" cy=".85" r=".8">
              <stop offset="0" stopColor="#38d0e8" />
              <stop offset=".6" stopColor="#185888" />
              <stop offset="1" stopColor="#a8c8d8" />
            </radialGradient>
          </defs>
          <circle cx="19" cy="19" r="18" fill="url(#orb)" stroke="#bcd" strokeWidth="1" />
          <path d="M11 12c3-2 5-1 8 0l-2 7c-3-1-5-1-8 0z" fill="#f07030" />
          <path d="M20 12c3 2 5 1 8 0l-2 7c-3 1-5 1-8 0z" fill="#90c830" />
          <path d="M9 20c3-1 5-1 8 0l-2 7c-3-1-5-1-8 0z" fill="#38a8e8" />
          <path d="M18 20c3 1 5 1 8 0l-2 7c-3 1-5 1-8 0z" fill="#f8c820" />
        </svg>
      </button>
      <button aria-label="资源管理器" className={clsx('ml-[13px] w-[51px] bg-[#68d8d4]', task)}>
        <svg viewBox="0 0 34 30" className="h-[30px] w-[34px]" aria-hidden="true">
          <path d="M2 3h9l2 3h16v20H2z" fill="#e8c860" />
          <path d="M5 1h10v8H5zM19 2h9v8h-9z" fill="#fff" />
          <path d="M6 2h4v2H6z" fill="#30a040" />
          <path d="M21 4h4v2h-4z" fill="#c03030" />
          <path d="M1 8h31v19H1z" fill="#f8e49c" stroke="#d8b860" />
          <path d="M6 29V19h22v10h-5v-5H11v5z" fill="#98d0f0" stroke="#5090c0" />
        </svg>
      </button>
      <span className="ml-px h-[38px] w-[6px] border-r border-l border-[#1d6b6d] bg-[#68d8d4]" />
      <button aria-label="浏览器" className={clsx('ml-1 w-[59px] bg-[#70d8d6]', task)}>
        <svg viewBox="0 0 32 32" className="size-8" aria-hidden="true">
          <circle cx="16" cy="16" r="13" fill="#fff" />
          <path d="M25 19H9c1 6 9 7 12 3h4c-3 7-19 8-20-5C4 4 25 2 26 16zM10 15h11c-1-6-10-6-11 0z" fill="#50b820" />
          <path d="M3 30C0 22 14 4 29 2 16 8 8 18 3 30z" fill="#68c828" />
        </svg>
      </button>
      <button aria-label="QQ" className={clsx('ml-[3px] w-[59px] bg-gradient-to-b from-[#ecd080] to-[#d88a20]', task)}>
        <span className="h-[33px] w-[30px]"><Penguin /></span>
      </button>
      <button aria-label="迅雷" className={clsx('ml-[3px] w-[59px] bg-[linear-gradient(90deg,#20b840,#60d8b0_35%,#78dcd8)]', task)}>
        <span className="size-[30px]"><Bird /></span>
      </button>
      <button aria-label="Sprint-Layout" className={clsx('ml-[3px] w-[59px] bg-[#a8e8e6]', task)}>
        <svg viewBox="0 0 32 32" className="size-8" aria-hidden="true">
          <path d="M9 1h9v10H9zM20 15h11v10H20z" fill="#089008" stroke="#044404" />
          <circle cx="14" cy="20" r="11" fill="#0a980a" stroke="#044404" />
          <circle cx="14" cy="20" r="3.500" fill="#fff" />
        </svg>
      </button>
      <div className="ml-auto flex items-center text-white">
        <span className="flex size-[15px] items-center justify-center rounded-sm bg-[#2878e8] font-['Liberation_Sans'] text-[13px] font-bold">Q</span>
        <span className="ml-[7px] text-[13px]">中</span>
        <span className="mr-4 ml-[7px] size-0 border-x-[3px] border-t-[3px] border-x-transparent border-t-white" />
        <div className="mt-[3px] flex gap-2">
          <svg viewBox="0 0 16 16" className="size-4" aria-hidden="true">
            <path d="M0 0h16v16H0z" fill="#eee" />
            <path d="M1 5c4-1 5 1 7 3 2-2 3-4 7-3-2 3-4 4-7 4s-5-1-7-4zM8 4v10" stroke="#c01838" strokeWidth="1.200" fill="#d05068" />
          </svg>
          <span className="size-4"><Bird /></span>
          <svg viewBox="0 0 16 16" className="size-4" aria-hidden="true">
            <path d="M5 4h10v8H5zM7 15h7M10 12v3M1 1v5h3V1M2 6v8h4" fill="none" stroke="#fff" strokeWidth="1.400" />
          </svg>
          <span className="size-4"><Penguin /></span>
          <svg viewBox="0 0 16 16" className="size-4" aria-hidden="true">
            <path d="M8 0l7 2c0 7-2 11-7 14C3 13 1 9 1 2z" fill="#4cae30" stroke="#fff" strokeWidth="1.500" />
            <path d="M9 3L5 9h3l-1 4 4-6H8z" fill="#fff" />
          </svg>
          <svg viewBox="0 0 16 16" className="size-4" aria-hidden="true">
            <circle cx="8" cy="8" r="8" fill="#40a020" />
            <circle cx="8" cy="8" r="6" fill="#f0e020" />
            <path d="M8 4v8M4 8h8" stroke="#205010" strokeWidth="2" />
          </svg>
          <svg viewBox="0 0 16 16" className="size-4" aria-hidden="true">
            <path d="M1 5h3l4-4v14l-4-4H1z" fill="#fff" />
            <path d="M10 5c2 2 2 4 0 6M12 3c3 3 3 7 0 10" fill="none" stroke="#fff" />
          </svg>
        </div>
        <time className="mt-[-12px] mr-[30px] ml-10 w-[55px] font-['Noto_Sans','Noto_Sans_CJK_SC'] text-[11px] leading-none whitespace-nowrap">下午 10:31</time>
        <span className="h-[39px] w-[14px] border border-[#80c8c6] bg-[#2f9f9d]" />
      </div>
    </footer>
  );
}

export default function App() {
  return (
    <div className="relative flex h-screen flex-col overflow-hidden bg-[#f0f0f0] font-['Liberation_Sans','Noto_Sans_CJK_SC',sans-serif] text-[12px] leading-4 text-black">
      <TitleBar />
      <MenuBar />
      <Toolbar />
      <div className="flex min-h-0 flex-1 border-t border-white">
        <Sidebar />
        <Workspace />
        <SelectorPanel />
        <PropertiesPanel />
        <div className={clsx('w-[8px] shrink-0', DOTS)} />
        <LibraryPanel />
      </div>
      <StatusBar />
      <TaskBar />

      {/* network speed bubble */}
      <div className="absolute top-[18px] right-[106px] size-[70px] overflow-hidden rounded-full bg-gradient-to-b from-[#e8f2fa] to-white shadow">
        <p className="pt-6 pl-2 font-['Liberation_Sans'] text-[16px] leading-5 whitespace-nowrap text-[#222]">
          88.4<span className="text-[11px]">KB/S</span>
        </p>
        <p className="text-center text-[12px] leading-[18px] text-[#2890f0]">免费加速</p>
        <svg viewBox="0 0 70 18" className="absolute bottom-0 h-[18px] w-[70px]" aria-hidden="true">
          <path d="M0 2c20 4 40-3 70 0v16H0z" fill="#2c9bf4" />
        </svg>
      </div>

      {/* device sync bubble */}
      <button aria-label="连接设备" className="absolute right-[370px] bottom-[40px] flex size-[50px] items-center justify-center rounded-full border-2 border-[#2a84e8] bg-[radial-gradient(#58d8f8,#10b8f0)]">
        <svg viewBox="0 0 36 30" className="h-[30px] w-9" aria-hidden="true">
          <path d="M20 20H2V2h30v7M10 24h10M16 20v4M24 20v8h9V12h-4M20 11l5 5M25 11v5h-5" fill="none" stroke="#fff" strokeWidth="2" />
        </svg>
      </button>

      {/* site mark */}
      <div className="absolute right-[6px] bottom-0 flex flex-col items-center text-[#0a3a78] [-webkit-text-stroke:4px_white] [paint-order:stroke]">
        <span className="text-[32px] leading-[34px] font-black whitespace-nowrap">矿石收音机</span>
        <a href="#" className="font-['Lato'] text-[17px] leading-6 font-bold whitespace-nowrap">www.crystalradio.cn</a>
      </div>
    </div>
  );
}
